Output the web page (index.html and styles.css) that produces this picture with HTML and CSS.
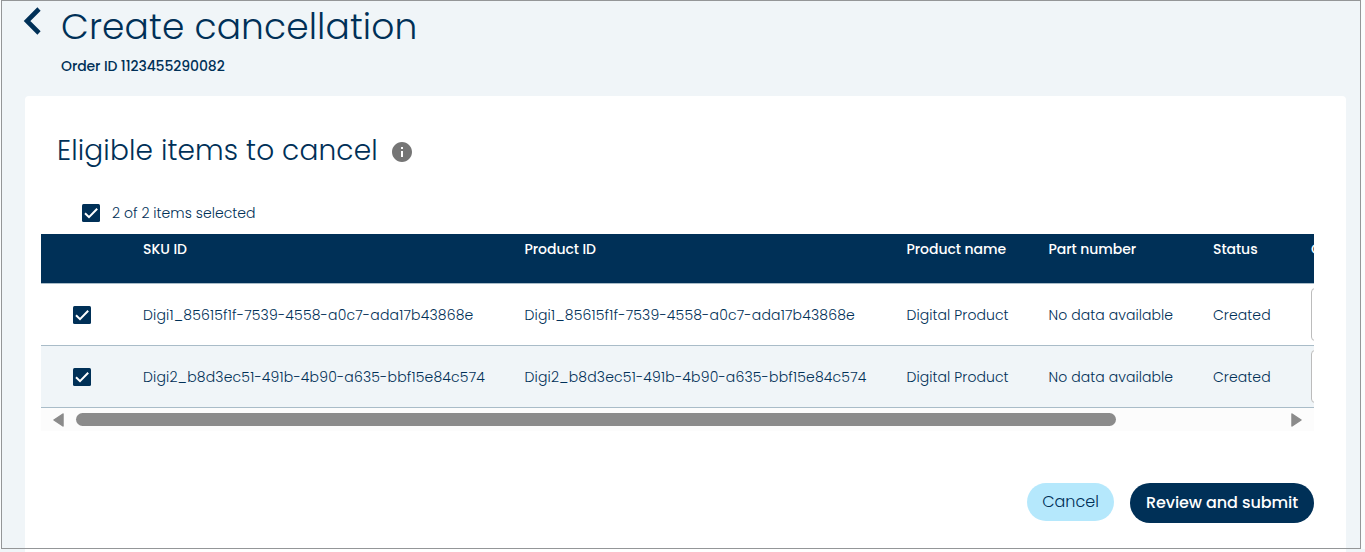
FILE: index.html
```html
<!DOCTYPE html>
<html lang="en">
<head>
<meta charset="utf-8">
<title>Create cancellation</title>
<link rel="stylesheet" href="styles.css">
</head>
<body>
<div class="page">
  <header class="header">
    <svg class="back" viewBox="0 0 18 28" width="18" height="28"><path d="M16 2 4 14l12 12" fill="none" stroke="#003057" stroke-width="4.6"/></svg>
    <div class="heading">
      <h1 class="title">Create cancellation</h1>
      <p class="order">Order ID 1123455290082</p>
    </div>
  </header>
  <main class="card">
    <div class="section">
      <h2 class="subtitle">Eligible items to cancel</h2>
      <svg class="info" viewBox="2 2 20 20" width="20" height="20"><path fill="#757575" d="M12 2C6.480 2 2 6.480 2 12s4.480 10 10 10 10-4.480 10-10S17.520 2 12 2zm1 15h-2v-6h2v6zm0-8h-2V7h2v2z"/></svg>
    </div>
    <div class="select-all">
      <svg class="check" viewBox="0 0 18 18" width="18" height="18"><rect width="18" height="18" rx="1.5" fill="#003057"/><path d="m3 9.200 4 4L15.200 4.800" fill="none" stroke="#fff" stroke-width="2"/></svg>
      <span class="count">2 of 2 items selected</span>
    </div>
    <div class="table">
      <div class="row head">
        <span></span><span>SKU ID</span><span>Product ID</span><span>Product name</span><span>Part number</span><span>Status</span><span>Quantity</span>
      </div>
      <div class="row">
        <svg class="check" viewBox="0 0 18 18" width="18" height="18"><rect width="18" height="18" rx="1.5" fill="#003057"/><path d="m3 9.200 4 4L15.200 4.800" fill="none" stroke="#fff" stroke-width="2"/></svg>
        <span class="id">Digi1_85615f1f-7539-4558-a0c7-ada17b43868e</span><span class="id">Digi1_85615f1f-7539-4558-a0c7-ada17b43868e</span><span>Digital Product</span><span>No data available</span><span>Created</span><div class="field"></div>
      </div>
      <div class="row alt">
        <svg class="check" viewBox="0 0 18 18" width="18" height="18"><rect width="18" height="18" rx="1.5" fill="#003057"/><path d="m3 9.200 4 4L15.200 4.800" fill="none" stroke="#fff" stroke-width="2"/></svg>
        <span class="id">Digi2_b8d3ec51-491b-4b90-a635-bbf15e84c574</span><span class="id">Digi2_b8d3ec51-491b-4b90-a635-bbf15e84c574</span><span>Digital Product</span><span>No data available</span><span>Created</span><div class="field"></div>
      </div>
      <div class="scrollbar">
        <svg viewBox="0 0 11 14" width="11" height="14"><path d="M10 1v12L1 7z" fill="#8b8b8b" stroke="#8b8b8b" stroke-width="1.5" stroke-linejoin="round"/></svg>
        <div class="track"><div class="thumb"></div></div>
        <svg viewBox="0 0 11 14" width="11" height="14"><path d="M1 1v12l9-6z" fill="#8b8b8b" stroke="#8b8b8b" stroke-width="1.5" stroke-linejoin="round"/></svg>
      </div>
    </div>
    <div class="actions">
      <button class="btn cancel">Cancel</button>
      <button class="btn submit">Review and submit</button>
    </div>
  </main>
</div>
</body>
</html>
```
FILE: styles.css
```css
* { box-sizing: border-box; }
body {
  margin: 0;
  height: 552px;
  overflow: hidden;
  background: #f0f5f8;
  color: #003057;
  font: 300 14px/20px Poppins, Inter, "Open Sans", sans-serif;
}
h1, h2, p { margin: 0; }
.page { height: 552px; padding: 0 19px 0 25px; display: flex; flex-direction: column; }
.page::after {
  content: "";
  position: absolute;
  inset: 0 4px 3px 1px;
  border: 1px solid #949698;
  box-shadow: 1px 0 0 3px #fafcfd;
  clip-path: inset(0 -4px 0 -1px);
}
.header { display: flex; height: 96px; padding-top: 7px; }
.back { margin-left: -2px; flex: none; }
.heading { padding-left: 20px; white-space: nowrap; }
.title { font-size: 36px; line-height: 40px; font-weight: 300; letter-spacing: 0.13px; }
.order { font-weight: 500; padding-top: 9px; letter-spacing: -0.1px; }
.card { flex: 1; background: #fff; border-radius: 4px 4px 0 0; padding: 32px 32px 0 16px; }
.section { display: flex; align-items: center; padding-left: 16px; height: 46px; gap: 14px; }
.subtitle { font-size: 28px; line-height: 40px; font-weight: 300; letter-spacing: 0.14px; }
.info { margin-top: 2px; }
.select-all { display: flex; align-items: center; gap: 12px; height: 20px; margin-top: 29px; padding-left: 41px; }
.count { letter-spacing: 0.04px; }
.check { display: block; flex: none; }
.table { margin-top: 11px; overflow: hidden; width: 1273px; }
.row {
  display: grid;
  grid-template-columns: 70px 381.5px 382px 142px 164.5px 98px 120px;
  padding-left: 32px;
  width: 1400px;
  height: 62px;
  align-items: center;
  border-bottom: 1px solid #a9bcc8;
  white-space: nowrap;
  letter-spacing: 0.07px;
}
.id { letter-spacing: 0.17px; }
.head { height: 50px; background: #003057; color: #fff; font-weight: 500; align-items: start; padding-top: 5px; letter-spacing: -0.06px; }
.alt { background: #f0f5f8; }
.field { height: 53px; border: 1px solid #bcbcbc; border-radius: 4px; background: #fff; }
.scrollbar { display: flex; align-items: center; height: 23px; padding: 0 12px 0 12px; background: #fcfcfc; }
.track { flex: 1; padding: 0 12px; }
.thumb { width: 1040px; height: 13px; border-radius: 7px; background: #8b8b8b; }
.actions { display: flex; justify-content: flex-end; align-items: flex-start; gap: 16px; margin-top: 52px; }
.btn { border: 0; padding: 0; border-radius: 20px; font: inherit; font-size: 16px; color: inherit; white-space: nowrap; }
.cancel { width: 87px; height: 38px; background: #b5e8fc; }
.submit { width: 184px; height: 40px; background: #003057; color: #fff; font-weight: 500; letter-spacing: -0.08px; }
```
